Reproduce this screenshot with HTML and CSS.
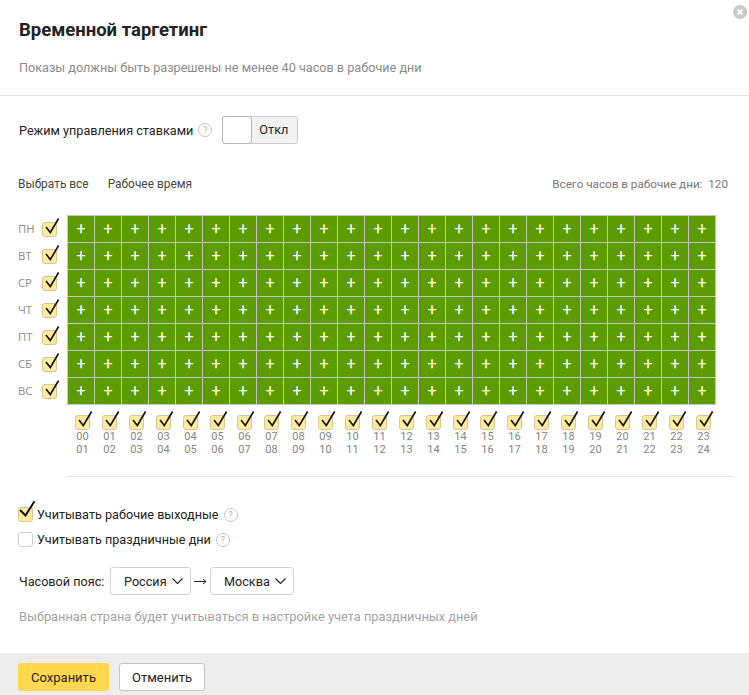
FILE: index.html
```html
<!DOCTYPE html>
<html lang="ru">
<head>
    <meta charset="UTF-8">
    <title>Временной таргетинг</title>
    <link rel="stylesheet" href="styles.css">
</head>
<body>
    <div class="modal">
        <svg class="close" width="14" height="14" viewBox="0 0 14 14">
            <circle cx="7" cy="7" r="7" fill="#c8c8c8"/>
            <path d="M4.5 4.5l5 5M9.5 4.5l-5 5" stroke="#fff" stroke-width="2"/>
        </svg>

        <div class="head">
            <h1 class="title">Временной таргетинг</h1>
            <p class="hint">Показы должны быть разрешены не менее 40 часов в рабочие дни</p>
        </div>

        <div class="body">
            <div class="mode">
                <span>Режим управления ставками</span>
                <span class="help">?</span>
                <div class="toggle">
                    <span class="toggle-knob"></span>
                    <span class="toggle-text">Откл</span>
                </div>
            </div>

            <div class="links">
                <span class="link">Выбрать все</span>
                <span class="link">Рабочее время</span>
                <span class="total">Всего часов в рабочие дни:&nbsp; 120</span>
            </div>

            <!-- rows and hours are filled in by script.js -->
            <div class="schedule">
                <div class="days" id="days"></div>
                <div class="grid" id="grid"></div>
            </div>
            <div class="hours" id="hours"></div>

            <div class="divider"></div>

            <label class="option">
                <span class="check">
                    <svg class="tick" width="19" height="19" viewBox="0 0 19 19"><path d="M2 8l5.5 5.5L16.5-.8" fill="none" stroke="#111" stroke-width="2"/></svg>
                </span>
                <span>Учитывать рабочие выходные</span>
                <span class="help">?</span>
            </label>
            <label class="option">
                <span class="check check-off"></span>
                <span>Учитывать праздничные дни</span>
                <span class="help">?</span>
            </label>

            <div class="zone">
                <span class="zone-label">Часовой пояс:</span>
                <div class="select select-country">Россия
                    <svg width="11" height="6" viewBox="0 0 11 6"><path d="M.5.5l5 5 5-5" fill="none" stroke="#222" stroke-width="1.1"/></svg>
                </div>
                <svg class="arrow" width="13" height="7" viewBox="0 0 13 7"><path d="M0 3.5h12M9 1l3 2.5L9 6" fill="none" stroke="#222"/></svg>
                <div class="select select-city">Москва
                    <svg width="11" height="6" viewBox="0 0 11 6"><path d="M.5.5l5 5 5-5" fill="none" stroke="#222" stroke-width="1.1"/></svg>
                </div>
            </div>
            <p class="zone-note">Выбранная страна будет учитываться в настройке учета праздничных дней</p>
        </div>

        <div class="footer">
            <button class="btn btn-save">Сохранить</button>
            <button class="btn btn-cancel">Отменить</button>
        </div>
    </div>
    <script src="script.js"></script>
</body>
</html>
```

FILE: styles.css
```css
html, body {
    margin: 0;
    padding: 0;
    background-color: #fff;
}
body {
    font-family: Roboto, "Open Sans", sans-serif;
    font-size: 12.65px;
    color: #222;
}
.modal {
    position: relative;
    width: 749px;
    height: 695px;
    display: flex;
    flex-direction: column;
    overflow: hidden;
}
.close {
    position: absolute;
    top: 5px;
    right: 2px;
}
.head {
    flex: none;
    height: 96px;
    padding: 20px 19px 0;
    box-sizing: border-box;
    border-bottom: 1px solid #e3e3e3;
}
.title {
    margin: 0;
    font-size: 18.5px;
    line-height: 20px;
    font-weight: 700;
}
.hint {
    margin: 19px 0 0;
    line-height: 18px;
    color: #8a8a8a;
}
.body {
    flex: 1;
    padding: 20px 21px 0 18px;
}
.mode {
    display: flex;
    align-items: center;
    height: 28px;
    padding-left: 1px;
}
.help {
    display: inline-block;
    width: 12px;
    height: 12px;
    margin-left: 5px;
    border: 1px solid #c6c6c6;
    border-radius: 50%;
    color: #b5b5b5;
    font-size: 9px;
    line-height: 12px;
    text-align: center;
}
.toggle {
    display: flex;
    width: 76px;
    height: 28px;
    margin-left: 10px;
    box-sizing: border-box;
    border: 1px solid #cfcfcf;
    border-radius: 3px;
    background-color: #f2f2f2;
}
.toggle-knob {
    width: 28px;
    margin: -1px 0 -1px -1px;
    background-color: #fff;
    border: 1px solid #b5b5b5;
    border-radius: 3px;
}
.toggle-text {
    flex: 1;
    padding-right: 2px;
    text-align: center;
    line-height: 26px;
}
.links {
    display: flex;
    margin-top: 31px;
    line-height: 18px;
    font-size: 11.9px;
    color: #444;
}
.link {
    margin-right: 19px;
}
.total {
    margin-left: auto;
    font-size: 11.7px;
    color: #777;
}
.schedule {
    display: flex;
    margin-top: 22px;
}
.days {
    width: 49px;
    flex: none;
}
.day {
    display: flex;
    align-items: center;
    justify-content: space-between;
    height: 27px;
    padding: 1px 10px 0 0;
    box-sizing: border-box;
    font-family: "Open Sans", sans-serif;
    color: #8a8a8a;
    font-size: 11.3px;
}
.day-name {
    margin-bottom: 2px;
}
.grid {
    display: grid;
    grid-template-columns: repeat(24, 27px);
    grid-auto-rows: 27px;
    width: 649px;
    height: 190px;
    box-sizing: border-box;
    border-top: 1px solid #c4c4c4;
    border-left: 1px solid #c4c4c4;
}
.cell {
    box-sizing: border-box;
    border-right: 1px solid #c4c4c4;
    border-bottom: 1px solid #c4c4c4;
    background-color: #5d9c00;
    color: #fff;
    font-size: 16px;
    line-height: 26px;
    text-align: center;
}
.check {
    position: relative;
    display: block;
    flex: none;
    width: 15px;
    height: 15px;
    box-sizing: border-box;
    background-color: #ffeba0;
    border: 1px solid #d8c58f;
    border-radius: 3px;
}
.check-off {
    background-color: #fff;
    border-color: #cfcfcf;
}
.tick {
    position: absolute;
    left: -1px;
    top: -6px;
    overflow: visible;
}
.hours {
    display: grid;
    grid-template-columns: repeat(24, 27px);
    margin: 10px 0 0 51px;
}
.hour {
    display: flex;
    flex-direction: column;
    align-items: center;
    font-size: 11px;
    color: #858585;
}
.hour-num {
    display: block;
    height: 13px;
    line-height: 13px;
}
.divider {
    height: 1px;
    width: 666px;
    margin: 20px 0 0 49px;
    background-color: #e6e6e6;
}
.option {
    display: flex;
    align-items: center;
    height: 25px;
    gap: 4px;
}
.option .help {
    margin-left: 1px;
}
.divider + .option {
    margin-top: 25px;
}
.zone {
    display: flex;
    align-items: center;
    height: 28px;
    margin-top: 15px;
}
.zone-label {
    width: 92px;
    padding-left: 1px;
    box-sizing: border-box;
}
.select {
    display: flex;
    align-items: center;
    justify-content: space-between;
    height: 28px;
    padding: 0 7px 0 13px;
    box-sizing: border-box;
    border: 1px solid #d3d3d3;
    border-radius: 3px;
}
.select-country {
    width: 81px;
}
.select-city {
    width: 84px;
}
.arrow {
    margin: 0 3px;
}
.zone-note {
    margin: 13px 0 0 1px;
    line-height: 18px;
    font-size: 12.8px;
    color: #a3a3a3;
}
.footer {
    flex: none;
    display: flex;
    align-items: center;
    gap: 10px;
    height: 42px;
    padding: 6px 0 0 18px;
    box-sizing: border-box;
    background-color: #ededed;
}
.btn {
    height: 28px;
    box-sizing: border-box;
    font-family: inherit;
    font-size: 13px;
    color: #222;
    border-radius: 3px;
    padding: 0;
}
.btn-save {
    width: 91px;
    background-color: #ffd84d;
    border: none;
}
.btn-cancel {
    width: 86px;
    background-color: #fff;
    border: 1px solid #c4c4c4;
}
```

FILE: script.js
```js
var dayNames = ['ПН', 'ВТ', 'СР', 'ЧТ', 'ПТ', 'СБ', 'ВС'];
var tick = '<span class="check"><svg class="tick" width="19" height="19" viewBox="0 0 19 19">' +
    '<path d="M4 10l4.3 5.5L16.6 1.5" fill="none" stroke="#111" stroke-width="1.6"/></svg></span>';

function pad(n) {
    return n < 10 ? '0' + n : '' + n;
}

var days = '';
var cells = '';
var hours = '';

for (var d = 0; d < 7; d++) {
    days += '<div class="day"><span class="day-name">' + dayNames[d] + '</span>' + tick + '</div>';
    for (var c = 0; c < 24; c++) {
        cells += '<div class="cell">+</div>';
    }
}
for (var h = 0; h < 24; h++) {
    hours += '<div class="hour">' + tick +
        '<span class="hour-num">' + pad(h) + '</span>' +
        '<span class="hour-num">' + pad(h + 1) + '</span></div>';
}

document.getElementById('days').innerHTML = days;
document.getElementById('grid').innerHTML = cells;
document.getElementById('hours').innerHTML = hours;
```
